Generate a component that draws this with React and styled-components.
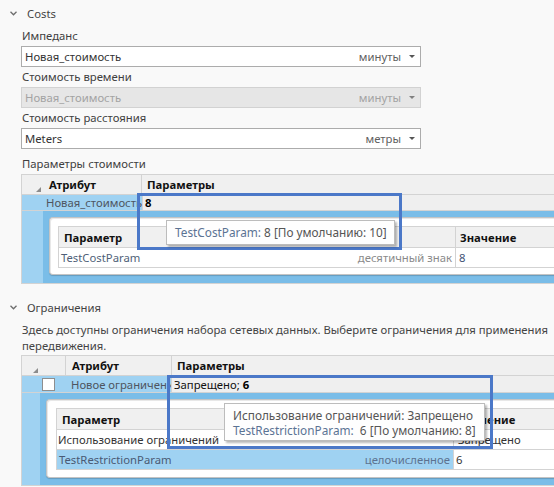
import React from "react";
import styled, { createGlobalStyle } from "styled-components";

const FONT = `"Noto Sans", "Open Sans", "DejaVu Sans", sans-serif`;
const LIGHT_BLUE = "#9fd2f2";
const DETAIL_BLUE = "#7abde8";
const LINE = "#d3d3d3";

const GlobalStyle = createGlobalStyle`
  html, body { margin: 0; padding: 0; background: #f9f9f9; }
`;

const Page = styled.div`
  position: relative;
  width: 554px;
  height: 487px;
  overflow: hidden;
  background: #f9f9f9;
  font-family: ${FONT};
  font-size: 11.3px;
  color: #3a3a3a;
`;

const SectionHeader = styled.div`
  display: flex;
  align-items: center;
  gap: 10px;
  height: 26px;
  padding-left: 10px;
  margin-top: ${(p) => p.$top || 0}px;
  color: #444;
`;

const SectionBody = styled.div`
  padding-left: 21px;
`;

const FieldLabel = styled.div`
  height: 20px;
  line-height: 20px;
  padding-left: 1px;
  margin-top: ${(p) => p.$gap || 0}px;
  white-space: nowrap;
  color: #404040;
`;

const Select = styled.div`
  box-sizing: border-box;
  width: 400px;
  height: 21px;
  display: flex;
  align-items: center;
  padding: 0 5px 0 3px;
  border: 1px solid ${(p) => (p.$disabled ? "#d2d2d2" : "#acacac")};
  background: ${(p) => (p.$disabled ? "#e6e6e6" : "#ffffff")};
  color: ${(p) => (p.$disabled ? "#a3a3a3" : "#333")};
`;

const SelectValue = styled.span`
  flex: 1;
  white-space: nowrap;
`;

const SelectUnit = styled.span`
  margin-right: 8px;
  color: ${(p) => (p.$disabled ? "#a3a3a3" : "#5f5f5f")};
`;

const Caret = styled.span`
  width: 0;
  height: 0;
  border-left: 3px solid transparent;
  border-right: 3px solid transparent;
  border-top: 3px solid ${(p) => (p.$disabled ? "#808080" : "#555")};
`;

const Description = styled.div`
  line-height: 16px;
  padding: 2px 0 1px 1px;
  white-space: nowrap;
  color: #444;
`;

/* ---------- outer grid ---------- */

const Grid = styled.div`
  width: 640px;
  border-top: 1px solid ${LINE};
  border-left: 1px solid ${LINE};
  border-bottom: 1px solid ${LINE};
`;

const GridHeader = styled.div`
  display: flex;
  height: 19px;
  background: #f0f0f0;
  border-bottom: 1px solid ${LINE};
  font-weight: 700;
  color: #111;
`;

const GridRow = styled.div`
  display: flex;
  height: ${(p) => p.$h}px;
  border-bottom: 1px solid ${LINE};
  background: #efefef;
`;

const Corner = styled.div`
  position: relative;
  box-sizing: border-box;
  width: ${(p) => p.$w}px;
  flex: none;
  &::after {
    content: "";
    position: absolute;
    right: ${(p) => p.$r}px;
    bottom: 2px;
    width: 0;
    height: 0;
    border-left: 5px solid transparent;
    border-bottom: 5px solid #8c8c8c;
  }
`;

const HeadCell = styled.div`
  box-sizing: border-box;
  width: ${(p) => (p.$w ? `${p.$w}px` : "auto")};
  flex: ${(p) => (p.$w ? "none" : 1)};
  display: flex;
  align-items: center;
  padding-left: ${(p) => p.$pl ?? 6}px;
  border-right: ${(p) => (p.$divider ? `1px solid ${LINE}` : "none")};
  white-space: nowrap;
`;

const RowHeadCell = styled.div`
  width: ${(p) => p.$w}px;
  flex: none;
  background: ${LIGHT_BLUE};
`;

const CheckCell = styled.div`
  box-sizing: border-box;
  width: ${(p) => p.$w}px;
  flex: none;
  display: flex;
  align-items: center;
  padding-left: 2px;
  background: ${LIGHT_BLUE};
`;

const CheckBox = styled.div`
  box-sizing: border-box;
  width: 13px;
  height: 13px;
  background: #fff;
  border: 1px solid #8e8e8e;
`;

const NameCell = styled.div`
  box-sizing: border-box;
  width: ${(p) => p.$w}px;
  flex: none;
  display: flex;
  align-items: center;
  padding-left: ${(p) => p.$pl}px;
  background: ${LIGHT_BLUE};
  color: #4e5560;
  white-space: nowrap;
  overflow: hidden;
`;

const ParamsCell = styled.div`
  flex: 1;
  display: flex;
  align-items: center;
  padding-left: 2px;
  color: #111;
  white-space: nowrap;
  border-left: 1px solid ${LINE};
`;

const Strong = styled.b`
  font-weight: 700;
  color: #000;
`;

const DetailRow = styled.div`
  display: flex;
`;

const DetailArea = styled.div`
  flex: 1;
  background: ${DETAIL_BLUE};
  padding: 6px 0 ${(p) => p.$pb}px 6px;
`;

const Panel = styled.div`
  background: #fff;
  border: 1px solid #c4c4c4;
  border-right: none;
  border-radius: 4px 0 0 4px;
  box-shadow: inset 1px 1px 0 #e8e8e8, 0 1px 1px rgba(0, 0, 0, 0.18);
  padding: ${(p) => p.$pt}px 0 ${(p) => p.$pb}px ${(p) => p.$pl}px;
`;

/* ---------- inner sub table ---------- */

const SubTable = styled.div`
  border: 1px solid ${LINE};
  border-right: none;
  background: #fff;
`;

const SubHeader = styled.div`
  display: flex;
  height: 20px;
  background: #f0f0f0;
  font-weight: 700;
  color: #111;
`;

const SubRow = styled.div`
  display: flex;
  height: 19px;
  border-top: 1px solid ${LINE};
`;

const ParamCell = styled.div`
  box-sizing: border-box;
  width: 397px;
  flex: none;
  display: flex;
  align-items: center;
  justify-content: space-between;
  padding: 0 3px 0 ${(p) => p.$pl ?? 2}px;
  border-right: 1px solid ${LINE};
  background: ${(p) => (p.$selected ? LIGHT_BLUE : "transparent")};
  color: ${(p) => p.$color || "#333"};
  white-space: nowrap;
`;

const TypeText = styled.span`
  color: ${(p) => p.$color || "#8a8a8a"};
`;

const ValueCell = styled.div`
  flex: 1;
  display: flex;
  align-items: center;
  padding-left: ${(p) => p.$pl ?? 3}px;
  color: ${(p) => p.$color || "#333"};
  white-space: nowrap;
`;

/* ---------- overlays ---------- */

const Highlight = styled.div`
  position: absolute;
  box-sizing: border-box;
  border: 3px solid #4b78c8;
  pointer-events: none;
`;

const Tooltip = styled.div`
  position: absolute;
  box-sizing: border-box;
  background: #fefefe;
  border: 1px solid #bcbcbc;
  box-shadow: 2px 2px 2px rgba(0, 0, 0, 0.28);
  padding: ${(p) => p.$pad};
  font-size: 11.8px;
  line-height: 15px;
  color: #555;
  white-space: nowrap;
`;

const TipKey = styled.span`
  color: #5b7394;
`;

const Chevron = () => (
  <svg width="7" height="5" viewBox="0 0 7 5">
    <path d="M0.5 0.8 L3.5 3.8 L6.5 0.8" fill="none" stroke="#6d6d6d" strokeWidth="1.3" />
  </svg>
);

export default function App() {
  return (
    <Page>
      <GlobalStyle />

      <SectionHeader>
        <Chevron />
        <span>Costs</span>
      </SectionHeader>
      <SectionBody>
        <FieldLabel>Импеданс</FieldLabel>
        <Select>
          <SelectValue>Новая_стоимость</SelectValue>
          <SelectUnit>минуты</SelectUnit>
          <Caret />
        </Select>
        <FieldLabel>Стоимость времени</FieldLabel>
        <Select $disabled>
          <SelectValue>Новая_стоимость</SelectValue>
          <SelectUnit $disabled>минуты</SelectUnit>
          <Caret $disabled />
        </Select>
        <FieldLabel>Стоимость расстояния</FieldLabel>
        <Select>
          <SelectValue>Meters</SelectValue>
          <SelectUnit>метры</SelectUnit>
          <Caret />
        </Select>
        <FieldLabel $gap={5}>Параметры стоимости</FieldLabel>

        <Grid>
          <GridHeader>
            <Corner $w={21} $r={2} />
            <HeadCell $w={99} $pl={6} $divider>Атрибут</HeadCell>
            <HeadCell $pl={5}>Параметры</HeadCell>
          </GridHeader>
          <GridRow $h={15}>
            <RowHeadCell $w={21} />
            <NameCell $w={99} $pl={3}>Новая_стоимость</NameCell>
            <ParamsCell>
              <Strong>8</Strong>
            </ParamsCell>
          </GridRow>
          <DetailRow>
            <RowHeadCell $w={21} />
            <DetailArea $pb={8}>
              <Panel $pt={8} $pb={6} $pl={8}>
                <SubTable>
                  <SubHeader>
                    <ParamCell $pl={5} $color="#111">Параметр</ParamCell>
                    <ValueCell $pl={4} $color="#111">Значение</ValueCell>
                  </SubHeader>
                  <SubRow>
                    <ParamCell $color="#4f5f78">
                      <span>TestCostParam</span>
                      <TypeText>десятичный знак</TypeText>
                    </ParamCell>
                    <ValueCell $color="#3f5274">8</ValueCell>
                  </SubRow>
                </SubTable>
              </Panel>
            </DetailArea>
          </DetailRow>
        </Grid>
      </SectionBody>

      <SectionHeader $top={10}>
        <Chevron />
        <span>Ограничения</span>
      </SectionHeader>
      <SectionBody>
        <Description>
          Здесь доступны ограничения набора сетевых данных. Выберите ограничения для применения
          <br />
          передвижения.
        </Description>

        <Grid>
          <GridHeader>
            <Corner $w={18} $r={2} />
            <HeadCell $w={26} $pl={0} $divider />
            <HeadCell $w={106} $pl={6} $divider>Атрибут</HeadCell>
            <HeadCell $pl={5}>Параметры</HeadCell>
          </GridHeader>
          <GridRow $h={16}>
            <RowHeadCell $w={18} />
            <CheckCell $w={26}>
              <CheckBox />
            </CheckCell>
            <NameCell $w={105} $pl={5}>Новое ограничение</NameCell>
            <ParamsCell>
              Запрещено;&nbsp;<Strong>6</Strong>
            </ParamsCell>
          </GridRow>
          <DetailRow>
            <RowHeadCell $w={18} />
            <DetailArea $pb={7}>
              <Panel $pt={8} $pb={7} $pl={9}>
                <SubTable>
                  <SubHeader>
                    <ParamCell $pl={5} $color="#111">Параметр</ParamCell>
                    <ValueCell $pl={5} $color="#111">Значение</ValueCell>
                  </SubHeader>
                  <SubRow>
                    <ParamCell $pl={1} $color="#333">
                      <span>Использование ограничений</span>
                    </ParamCell>
                    <ValueCell $pl={4}>Запрещено</ValueCell>
                  </SubRow>
                  <SubRow>
                    <ParamCell $pl={2} $selected $color="#4a5a74">
                      <span>TestRestrictionParam</span>
                      <TypeText $color="#5d7290">целочисленное</TypeText>
                    </ParamCell>
                    <ValueCell $pl={2}>6</ValueCell>
                  </SubRow>
                </SubTable>
              </Panel>
            </DetailArea>
          </DetailRow>
        </Grid>
      </SectionBody>

      <Highlight style={{ left: 137, top: 193, width: 265, height: 57 }} />
      <Tooltip $pad="4px 0 0 8px" style={{ left: 166, top: 220, width: 229, height: 25 }}>
        <TipKey>TestCostParam:</TipKey> 8 [По умолчанию: 10]
      </Tooltip>

      <Highlight style={{ left: 167, top: 375, width: 326, height: 74 }} />
      <Tooltip $pad="4px 0 0 8px" style={{ left: 224, top: 403, width: 261, height: 38 }}>
        Использование ограничений: Запрещено
        <br />
        <TipKey>TestRestrictionParam:</TipKey>&nbsp; 6 [По умолчанию: 8]
      </Tooltip>
    </Page>
  );
}
